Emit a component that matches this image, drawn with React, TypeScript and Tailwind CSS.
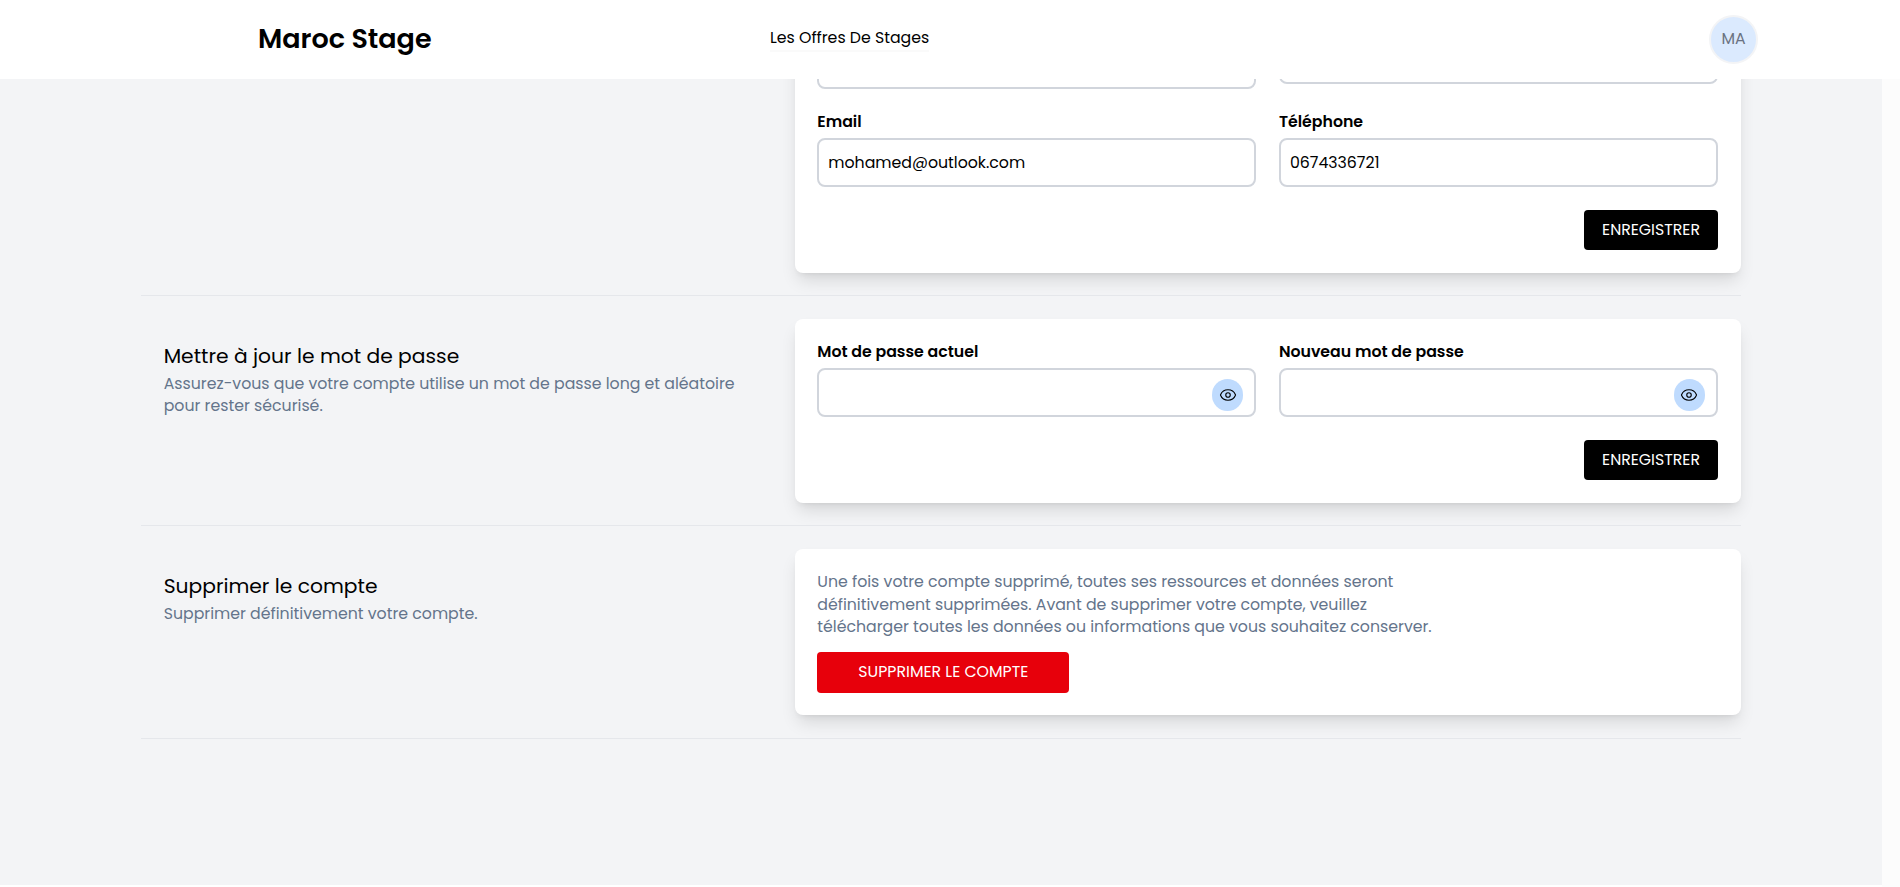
import React from "react";
import { Eye } from "lucide-react";

const body = "text-[15.75px] leading-[22.5px] whitespace-nowrap text-[#64748b]";

function Section({ title, lines, children, className }: {
  title?: string;
  lines?: string[];
  children: React.ReactNode;
  className: string;
}) {
  return (
    <section className={`flex border-b border-gray-200 ${className}`}>
      <div className="w-[654px] shrink-0 pl-[22.7px] pt-[23px]">
        {title && <h2 className="mb-[2.5px] text-[20.25px] leading-7 text-black">{title}</h2>}
        {lines?.map((text) => (
          <p key={text} className={body}>{text}</p>
        ))}
      </div>
      <div className="w-[946px] shrink-0 rounded-lg bg-white pr-[23px] pl-[22.3px] shadow-[0_10px_17px_-3px_rgba(0,0,0,0.12),0_4px_6px_-4px_rgba(0,0,0,0.1)]">{children}</div>
    </section>
  );
}

function Field({ label, value, secret }: { label: string; value?: string; secret?: boolean }) {
  return (
    <div>
      <label className="mb-1.5 block text-[15.75px] leading-[21px] font-semibold whitespace-nowrap">{label}</label>
      <div className="relative flex h-[49px] items-center rounded-lg border-2 border-gray-300 bg-white px-[9px] text-[15.75px]">
        <span>{value}</span>
        {secret && (
          <button className="absolute top-[9px] right-[11px] flex size-[31.5px] items-center justify-center rounded-full bg-[#bfdbfe]">
            <Eye size={18} strokeWidth={1.5} />
          </button>
        )}
      </div>
    </div>
  );
}

function SaveButton() {
  return (
    <div className="mt-[23px] flex justify-end pb-[23px]">
      <button className="h-10 rounded bg-black px-[18px] text-[15.75px] text-white">ENREGISTRER</button>
    </div>
  );
}

export default function App() {
  return (
    <div className="h-[887px] w-full overflow-hidden bg-white font-[Poppins,Inter,sans-serif] text-black">
      <header className="relative z-10 flex h-[79px] items-center bg-white pl-[258px]">
        <div className="w-[512px] pb-0.5 text-[27px] leading-8 font-semibold">Maroc Stage</div>
        <nav className="w-[939px] pb-0.5">
          <a className="inline-block border-b-2 border-[#fafafa] text-[15.75px] leading-6">Les Offres De Stages</a>
        </nav>
        <div className="flex size-[49px] items-center justify-center rounded-full border-2 border-gray-100 bg-blue-100 pb-0.5 text-[15.75px] text-gray-500">MA</div>
      </header>

      <div className="flex h-[808px]">
        <main className="h-[806px] flex-1 overflow-hidden bg-gray-100 pl-[141px]">
          <div className="-mt-[60px] w-[1600px]">
            <Section className="pb-[22px]">
              <div className="grid grid-cols-2 gap-[22.5px] pt-[21px]">
                <div className="h-[49px] rounded-lg border-2 border-gray-300" />
                <div className="h-11 rounded-lg border-2 border-gray-300" />
              </div>
              <div className="mt-[22px] grid grid-cols-2 gap-[22.5px]">
                <Field label="Email" value="mohamed@outlook.com" />
                <Field label="Téléphone" value="0674336721" />
              </div>
              <SaveButton />
            </Section>

            <Section
              className="pt-[23px] pb-[22px]"
              title="Mettre à jour le mot de passe"
              lines={[
                "Assurez-vous que votre compte utilise un mot de passe long et aléatoire",
                "pour rester sécurisé.",
              ]}
            >
              <div className="grid grid-cols-2 gap-[22.5px] pt-[22px]">
                <Field label="Mot de passe actuel" secret />
                <Field label="Nouveau mot de passe" secret />
              </div>
              <SaveButton />
            </Section>

            <Section
              className="pt-[23px] pb-[23px]"
              title="Supprimer le compte"
              lines={["Supprimer définitivement votre compte."]}
            >
              <div className="pt-[22px] pb-[22px]">
                <p className={body}>Une fois votre compte supprimé, toutes ses ressources et données seront</p>
                <p className={body}>définitivement supprimées. Avant de supprimer votre compte, veuillez</p>
                <p className={body}>télécharger toutes les données ou informations que vous souhaitez conserver.</p>
                <button className="mt-[13.5px] block h-[41px] w-[252px] rounded bg-[#e7000b] pb-0.5 text-[15.75px] text-white">SUPPRIMER LE COMPTE</button>
              </div>
            </Section>
          </div>
        </main>
        <div className="w-[18px] bg-[#fcfcfc]" />
      </div>
    </div>
  );
}
